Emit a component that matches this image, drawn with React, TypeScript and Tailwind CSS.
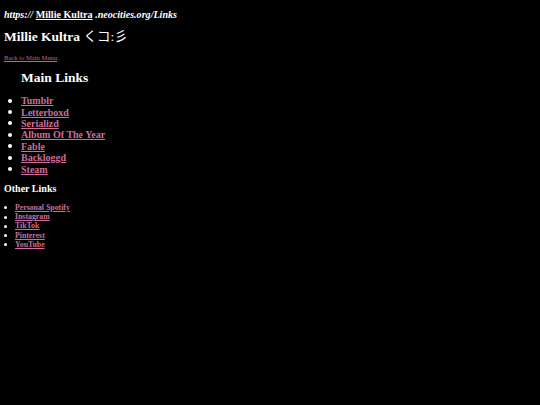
const mainLinks = ['Tumblr', 'Letterboxd', 'Serializd', 'Album Of The Year', 'Fable', 'Backloggd', 'Steam']
const otherLinks = ['Personal Spotify', 'Instagram', 'TikTok', 'Pinterest', 'YouTube']

const linkCls = 'text-[#cf6c99] underline'

export default function App() {
  return (
    <div className="min-h-[405px] w-[540px] bg-black pl-[4px] pt-[9px] text-white [font-family:'Liberation_Serif','Noto_Sans_CJK_JP',serif]">
      <p className="text-[10.1px] leading-[12px] font-bold italic">
        https:// <span className="not-italic underline">Millie Kultra</span> .neocities.org/Links
      </p>
      <h1 className="mt-[8px] text-[13.5px] leading-[16px] font-bold">
        Millie Kultra <span className="font-normal">くコ:彡</span>
      </h1>
      <a href="#" className="mt-[9px] block text-[6.6px] leading-[8px] text-[#c0628e] underline">
        Back to Main Menu
      </a>
      <h2 className="mt-[8px] pl-[17px] text-[13.5px] leading-[16px] font-bold">Main Links</h2>
      <ul className="mt-[9px]">
        {mainLinks.map((l) => (
          <li key={l} className="flex h-[11.4px] items-center text-[10px] font-bold">
            <span className="ml-[4px] mr-[9px] h-[4px] w-[4px] rounded-full bg-white" />
            <a href="#" className={linkCls}>
              {l}
            </a>
          </li>
        ))}
      </ul>
      <h3 className="mt-[8px] text-[10px] leading-[12px] font-bold">Other Links</h3>
      <ul className="mt-[8.4px]">
        {otherLinks.map((l) => (
          <li key={l} className="flex h-[9.25px] items-center text-[7.8px] font-bold">
            <span className="mr-[8px] h-[3px] w-[3px] rounded-full bg-white" />
            <a href="#" className={linkCls}>
              {l}
            </a>
          </li>
        ))}
      </ul>
    </div>
  )
}
